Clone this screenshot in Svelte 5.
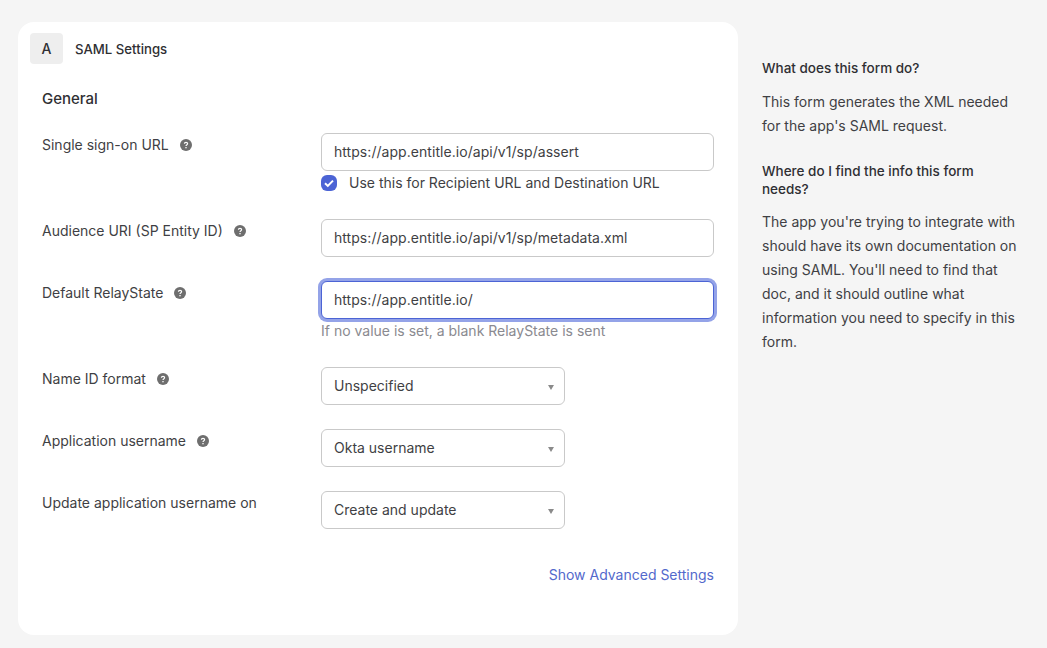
<script>
  const selects = [
    { label: "Name ID format", value: "Unspecified", help: true },
    { label: "Application username", value: "Okta username", help: true },
    { label: "Update application username on", value: "Create and update", help: false }
  ];
</script>

{#snippet helpIcon()}
  <svg class="help" viewBox="0 0 12 12" width="12" height="12" aria-hidden="true">
    <circle cx="6" cy="6" r="6" fill="#6e6e6e" />
    <path d="M4.4 4.7c0-.9.7-1.4 1.6-1.4s1.6.5 1.6 1.3c0 .7-.4 1-.9 1.3-.4.3-.7.5-.7 1" fill="none" stroke="#fff" stroke-width="1.2" />
    <rect x="5.35" y="8" width="1.3" height="1.3" fill="#fff" />
  </svg>
{/snippet}

<div class="page">
  <main class="card">
    <header class="cardHead">
      <span class="step">A</span>
      <h1>SAML Settings</h1>
    </header>

    <section class="form">
      <h2>General</h2>

      <div class="row">
        <div class="label">Single sign-on URL {@render helpIcon()}</div>
        <div class="field">
          <input type="text" value="https://app.entitle.io/api/v1/sp/assert" readonly />
          <label class="check">
            <span class="box">
              <svg viewBox="0 0 16 16" width="16" height="16" aria-hidden="true">
                <path d="M4 8.3l2.8 2.6L12 5.6" fill="none" stroke="#fff" stroke-width="2" />
              </svg>
            </span>
            Use this for Recipient URL and Destination URL
          </label>
        </div>
      </div>

      <div class="row">
        <div class="label">Audience URI (SP Entity ID) {@render helpIcon()}</div>
        <div class="field">
          <input type="text" value="https://app.entitle.io/api/v1/sp/metadata.xml" readonly />
        </div>
      </div>

      <div class="row">
        <div class="label">Default RelayState {@render helpIcon()}</div>
        <div class="field">
          <input class="focused" type="text" value="https://app.entitle.io/" readonly />
          <p class="hint">If no value is set, a blank RelayState is sent</p>
        </div>
      </div>

      {#each selects as s}
        <div class="row">
          <div class="label">{s.label} {#if s.help}{@render helpIcon()}{/if}</div>
          <div class="field">
            <div class="select">
              <span>{s.value}</span>
              <i class="arrow"></i>
            </div>
          </div>
        </div>
      {/each}

      <div class="more">
        <a href="#advanced">Show Advanced Settings</a>
      </div>
    </section>
  </main>

  <aside class="side">
    <h3>What does this form do?</h3>
    <p>This form generates the XML needed for the app's SAML request.</p>
    <h3 class="second">Where do I find the info this form needs?</h3>
    <p>The app you're trying to integrate with should have its own documentation on using SAML. You'll need to find that doc, and it should outline what information you need to specify in this form.</p>
  </aside>
</div>

<style>
  :global(body) {
    margin: 0;
    background: #f5f5f5;
    font-family: Inter, "Liberation Sans", sans-serif;
    color: #3f3f44;
  }
  .page {
    display: flex;
    align-items: flex-start;
    padding: 22px 0 0 18px;
    height: 648px;
    box-sizing: border-box;
    overflow: hidden;
  }
  .card {
    width: 720px;
    height: 613px;
    flex: none;
    background: #fff;
    border-radius: 16px;
    box-sizing: border-box;
    padding: 11px 24px 0 12px;
  }
  .cardHead {
    display: flex;
    align-items: center;
    gap: 12px;
  }
  .step {
    width: 33px;
    height: 31px;
    background: #eeeeee;
    border-radius: 4px;
    display: flex;
    align-items: center;
    justify-content: center;
    font-size: 14px;
    font-weight: 500;
    color: #2f2f33;
  }
  h1 {
    margin: 0;
    font-size: 13.2px;
    font-weight: 500;
    color: #2f2f33;
  }
  .form {
    padding-left: 12px;
  }
  h2 {
    margin: 25px 0 24px;
    font-size: 15px;
    line-height: 20px;
    font-weight: 500;
    color: #2f2f33;
  }
  .row {
    display: grid;
    grid-template-columns: 279px 393px;
    margin-bottom: 24px;
  }
  .label {
    font-size: 14px;
    line-height: 24px;
    color: #3f3f44;
    display: flex;
    align-items: center;
    align-self: start;
    gap: 8px;
  }
  .help {
    margin-left: 3px;
  }
  input, .select {
    display: block;
    width: 100%;
    height: 38px;
    box-sizing: border-box;
    border: 1px solid #c9c9c9;
    border-radius: 6px;
    padding: 0 12px 2px;
    background: #fff;
    font: inherit;
    font-size: 14px;
    color: #3f3f44;
    outline: none;
  }
  input {
    letter-spacing: 0.05px;
  }
  .focused {
    border-color: #4c64d5;
    box-shadow: 0 0 0 3px #94a3e8;
  }
  .check {
    display: flex;
    align-items: center;
    gap: 12px;
    margin-top: 4px;
    font-size: 14px;
    line-height: 16px;
    height: 16px;
    margin-bottom: 4px;
  }
  .box {
    width: 16px;
    height: 16px;
    border-radius: 6px;
    background: #4c64d5;
    display: block;
  }
  .box svg {
    display: block;
  }
  .hint {
    margin: 2px 0;
    font-size: 14px;
    line-height: 20px;
    color: #8a8a90;
  }
  .select {
    position: relative;
    width: 244px;
    display: flex;
    align-items: center;
  }
  .arrow {
    position: absolute;
    right: 10px;
    top: 17px;
    border-left: 3.5px solid transparent;
    border-right: 3.5px solid transparent;
    border-top: 5px solid #8a8a8a;
  }
  .more {
    text-align: right;
    padding-top: 11px;
  }
  .more a {
    font-size: 14px;
    line-height: 20px;
    color: #5369cc;
    text-decoration: none;
  }
  .side {
    margin-left: 24px;
    width: 255px;
    padding-top: 37px;
  }
  h3 {
    margin: 0 0 13px;
    font-size: 13.5px;
    line-height: 18px;
    font-weight: 500;
    color: #2f2f33;
  }
  .second {
    margin: 24px 0 12px;
  }
  p {
    margin: 0;
    font-size: 14px;
    line-height: 24px;
    color: #3f3f44;
  }
</style>
